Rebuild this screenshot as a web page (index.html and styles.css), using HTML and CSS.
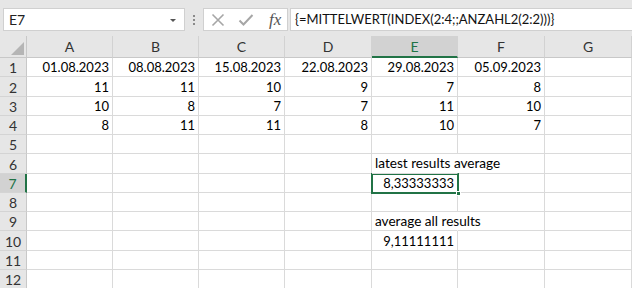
FILE: index.html
```html
<!DOCTYPE html>
<html>
<head>
<meta charset="utf-8">
<link rel="stylesheet" href="styles.css">
</head>
<body>
<div class="toolbar">
  <div class="namebox"><span class="ref">E7</span><span class="arrow"></span></div>
  <div class="dots"><i></i><i></i><i></i></div>
  <div class="fxbox">
    <svg class="ico" width="14" height="14" viewBox="0 0 14 14"><path d="M1.5 1.5 L12.5 12.5 M12.5 1.5 L1.5 12.5" stroke="#a6a6a6" stroke-width="1.6" fill="none"/></svg>
    <svg class="ico" width="16" height="14" viewBox="0 0 16 14"><path d="M1.5 7.5 L5.5 11.5 L14.5 2" stroke="#a6a6a6" stroke-width="2" fill="none"/></svg>
    <span class="fx">fx</span>
  </div>
  <div class="formula">{=MITTELWERT(INDEX(2:4;;ANZAHL2(2:2)))}</div>
</div>
<div class="sheet">
  <div class="corner"><span class="tri"></span></div>
  <div class="ch">A</div><div class="ch">B</div><div class="ch">C</div><div class="ch">D</div><div class="ch sel">E</div><div class="ch">F</div><div class="ch">G</div>

  <div class="rh">1</div>
  <div class="c r">01.08.2023</div><div class="c r">08.08.2023</div><div class="c r">15.08.2023</div><div class="c r">22.08.2023</div><div class="c r">29.08.2023</div><div class="c r">05.09.2023</div><div class="c"></div>

  <div class="rh">2</div>
  <div class="c r">11</div><div class="c r">11</div><div class="c r">10</div><div class="c r">9</div><div class="c r">7</div><div class="c r">8</div><div class="c"></div>

  <div class="rh">3</div>
  <div class="c r">10</div><div class="c r">8</div><div class="c r">7</div><div class="c r">7</div><div class="c r">11</div><div class="c r">10</div><div class="c"></div>

  <div class="rh">4</div>
  <div class="c r">8</div><div class="c r">11</div><div class="c r">11</div><div class="c r">8</div><div class="c r">10</div><div class="c r">7</div><div class="c"></div>

  <div class="rh">5</div>
  <div class="c"></div><div class="c"></div><div class="c"></div><div class="c"></div><div class="c"></div><div class="c"></div><div class="c"></div>

  <div class="rh">6</div>
  <div class="c"></div><div class="c"></div><div class="c"></div><div class="c"></div><div class="c l spill">latest results average</div><div class="c"></div><div class="c"></div>

  <div class="rh sel">7</div>
  <div class="c"></div><div class="c"></div><div class="c"></div><div class="c"></div><div class="c r active">8,33333333</div><div class="c"></div><div class="c"></div>

  <div class="rh">8</div>
  <div class="c"></div><div class="c"></div><div class="c"></div><div class="c"></div><div class="c"></div><div class="c"></div><div class="c"></div>

  <div class="rh">9</div>
  <div class="c"></div><div class="c"></div><div class="c"></div><div class="c"></div><div class="c l spill">average all results</div><div class="c"></div><div class="c"></div>

  <div class="rh">10</div>
  <div class="c"></div><div class="c"></div><div class="c"></div><div class="c"></div><div class="c r">9,11111111</div><div class="c"></div><div class="c"></div>

  <div class="rh">11</div>
  <div class="c"></div><div class="c"></div><div class="c"></div><div class="c"></div><div class="c"></div><div class="c"></div><div class="c"></div>

  <div class="rh">12</div>
  <div class="c"></div><div class="c"></div><div class="c"></div><div class="c"></div><div class="c"></div><div class="c"></div><div class="c"></div>
</div>
</body>
</html>
```

FILE: styles.css
```css
html, body {
  margin: 0;
  padding: 0;
  background: #ffffff;
  overflow: hidden;
}
body {
  width: 632px;
  height: 288px;
  font-family: Lato, "Open Sans", sans-serif;
  color: #000;
}
.toolbar {
  height: 36px;
  background: #e6e6e6;
  display: flex;
  align-items: flex-start;
  padding-top: 8px;
  box-sizing: border-box;
}
.namebox {
  margin-left: 3px;
  width: 182px;
  height: 23px;
  box-sizing: border-box;
  background: #fff;
  border: 1px solid #d0d0d0;
  display: flex;
  align-items: center;
  justify-content: space-between;
  padding: 0 8px 0 5px;
  font-size: 14px;
  color: #222;
}
.arrow {
  width: 0;
  height: 0;
  border-left: 3px solid transparent;
  border-right: 3px solid transparent;
  border-top: 3px solid #555;
  margin-top: 1px;
}
.dots {
  width: 18px;
  height: 23px;
  display: flex;
  flex-direction: column;
  align-items: center;
  justify-content: center;
  gap: 2px;
}
.dots i {
  display: block;
  width: 2px;
  height: 2px;
  background: #8a8a8a;
}
.fxbox {
  width: 85px;
  height: 23px;
  box-sizing: border-box;
  background: #fff;
  border: 1px solid #d0d0d0;
  display: flex;
  align-items: center;
  padding-left: 7px;
  gap: 13px;
}
.ico { display: block; }
.fx {
  font-family: "Liberation Serif", serif;
  font-style: italic;
  font-size: 17px;
  color: #555;
  margin-left: 2px;
  line-height: 1;
}
.formula {
  margin-left: 2px;
  flex: 1;
  height: 23px;
  box-sizing: border-box;
  background: #fff;
  border: 1px solid #d0d0d0;
  border-right: none;
  padding-left: 4px;
  font-size: 13px;
  line-height: 21px;
  white-space: nowrap;
  color: #111;
}
.sheet {
  display: grid;
  grid-template-columns: 27px 86px 86px 86px 87px 86px 87px 87px;
  grid-template-rows: 22px 19px 20px 19px 19px 19px 20px 19px 19px 19px 20px 19px 19px;
  font-size: 13px;
}
.corner, .ch, .rh {
  background: #e6e6e6;
  color: #333;
  box-sizing: border-box;
  font-size: 14px;
}
.corner {
  border-right: 1px solid #c8c8c8;
  border-bottom: 1px solid #c8c8c8;
  position: relative;
}
.tri {
  position: absolute;
  right: 2px;
  bottom: 2px;
  width: 0;
  height: 0;
  border-left: 13px solid transparent;
  border-bottom: 13px solid #b5b5b5;
}
.ch {
  border-right: 1px solid #d2d2d2;
  border-bottom: 1px solid #c8c8c8;
  display: flex;
  align-items: center;
  justify-content: center;
}
.ch.sel {
  background: #d2d2d2;
  color: #217346;
  border-bottom: 2px solid #217346;
}
.rh {
  border-right: 1px solid #c8c8c8;
  border-bottom: 1px solid #d4d4d4;
  display: flex;
  align-items: center;
  justify-content: center;
  padding-top: 1px;
}
.rh.sel {
  background: #d2d2d2;
  color: #217346;
  border-right: 2px solid #217346;
}
.c {
  box-sizing: border-box;
  border-right: 1px solid #dadada;
  border-bottom: 1px solid #dadada;
  padding: 1px 3px 0;
  display: flex;
  align-items: center;
  white-space: nowrap;
  line-height: 1;
}
.c.r { justify-content: flex-end; }
.c.l { justify-content: flex-start; }
.spill {
  overflow: visible;
  border-right-color: transparent;
  font-size: 13.6px;
  position: relative;
  z-index: 1;
}
.active {
  position: relative;
  outline: 2px solid #217346;
  outline-offset: -1px;
}
.active::after {
  content: "";
  position: absolute;
  right: -4px;
  bottom: -4px;
  width: 5px;
  height: 5px;
  background: #217346;
  border: 1px solid #fff;
  box-sizing: border-box;
}
```
